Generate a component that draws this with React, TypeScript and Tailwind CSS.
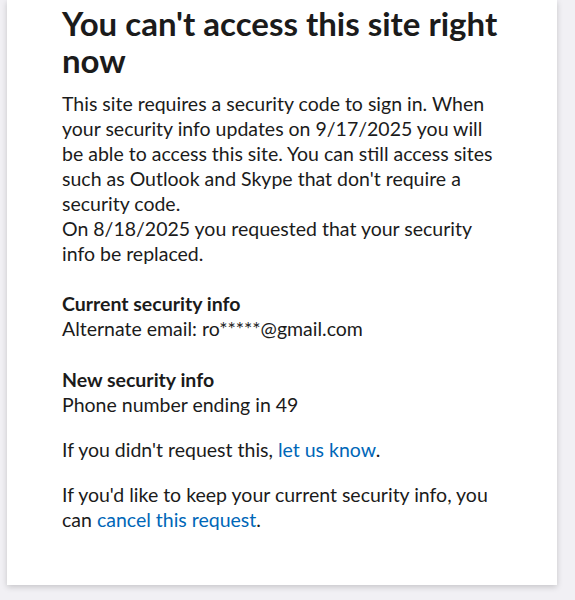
export default function App() {
  return (
    <div
      className="min-h-[600px] w-full bg-[#f1f0f4] pl-[7px] pr-[18px]"
      style={{ fontFamily: "Lato, 'Noto Sans', sans-serif" }}
    >
      <div className="h-[585px] w-[550px] bg-white px-[55px] pt-[5px] text-[#1b1b1b] shadow-[0_2px_6px_rgba(0,0,0,0.18)]">
        <h1 className="text-[33px] font-bold leading-[37px]">You can't access this site right now</h1>
        <div className="mt-[12px] text-[19.5px] leading-[25px]">
          <p>
            This site requires a security code to sign in. When your security info updates on 9/17/2025 you will be
            able to access this site. You can still access sites such as Outlook and Skype that don't require a
            security code.
          </p>
          <p>On 8/18/2025 you requested that your security info be replaced.</p>

          <div className="mt-[25px]">
            <p className="font-bold">Current security info</p>
            <p>Alternate email: ro*****@gmail.com</p>
          </div>

          <div className="mt-[26px]">
            <p className="font-bold">New security info</p>
            <p>Phone number ending in 49</p>
          </div>

          <p className="mt-[20px]">
            If you didn't request this, <a className="text-[#0067b8]">let us know</a>.
          </p>

          <p className="mt-[20px]">
            If you'd like to keep your current security info, you can{" "}
            <a className="text-[#0067b8]">cancel this request</a>.
          </p>
        </div>
      </div>
    </div>
  );
}
